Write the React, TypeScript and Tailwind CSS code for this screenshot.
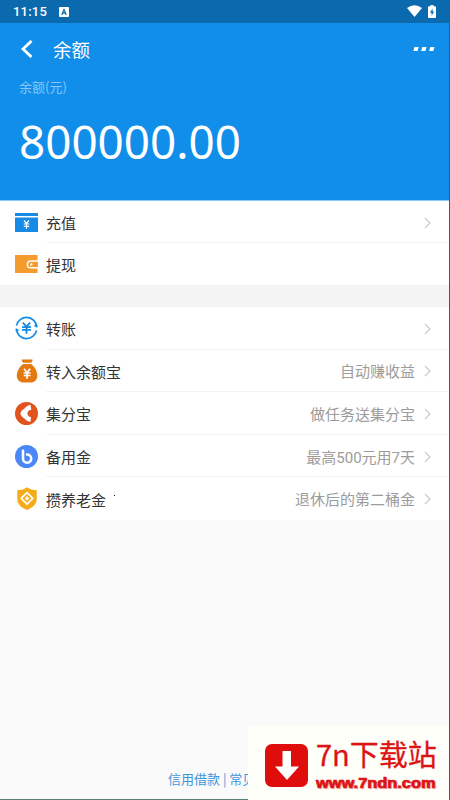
import React from 'react';

interface RowProps {
  icon: React.ReactNode;
  label: string;
  note?: string;
  arrow?: boolean;
  last?: boolean;
}

const Row: React.FC<RowProps> = ({ icon, label, note, arrow = true, last }) => (
  <div className="flex flex-1 items-center pl-[15px]">
    <div className="flex h-6 w-[23px] shrink-0 items-center justify-center">{icon}</div>
    <div
      className={`ml-2 flex h-full flex-1 items-center border-b pt-[2px] pr-[18px] ${last ? 'border-transparent' : 'border-[#f3f3f3]'}`}
    >
      <span className="text-[15px] leading-none text-[#333]">{label}</span>
      <span className="ml-auto pt-[3px] font-[Roboto,'Noto_Sans_CJK_SC',sans-serif] text-[15px] leading-none text-[#9c9c9c]">{note}</span>
      {arrow && (
        <svg className="ml-[9px]" width="7" height="12" viewBox="0 0 7 12" fill="none">
          <path d="M1 1l5 5-5 5" stroke="#c9c9c9" strokeWidth="1.2" />
        </svg>
      )}
    </div>
  </div>
);

const RechargeIcon = () => (
  <svg width="23" height="19" viewBox="0 0 23 19">
    <path d="M0 0h23v3H0zM0 4.5h23V19H0z" fill="#168be6" />
    <path d="M9 7.5l2.5 3 2.5-3M8.8 11h5.4M8.8 13.3h5.4M11.5 10.5v5.5" stroke="#fff" strokeWidth="1.2" fill="none" />
  </svg>
);

const WithdrawIcon = () => (
  <svg width="23" height="18" viewBox="0 0 23 18">
    <path d="M0 0h22.5v18H0z" fill="#f39b2d" />
    <path d="M23 6h-7.2a3.4 3.4 0 0 0 0 6.8H23" fill="#f39b2d" stroke="#fff" strokeWidth="1.4" />
    <circle cx="16.3" cy="9.4" r="1.2" fill="#fff" />
  </svg>
);

const TransferIcon = () => (
  <svg width="24" height="24" viewBox="0 0 24 24" fill="none" stroke="#168be6">
    <path d="M1.5 9.5A10.7 10.7 0 0 1 22.6 10.5M22.5 14.5A10.7 10.7 0 0 1 1.4 13.5" strokeWidth="1.8" />
    <path d="M19.4 9.4l3.8 2.6V8.5zM4.6 14.6L.8 12v3.5z" fill="#168be6" stroke="none" />
    <path d="M8.2 6.3l3.8 4.2 3.8-4.2M7.3 11h9.4M7.3 14h9.4M12 10.5v7.6" strokeWidth="1.9" />
  </svg>
);

const MoneyBagIcon = () => (
  <svg width="22" height="24" viewBox="0 0 22 24">
    <path d="M6.2.5h9.9q.7 0 .5.8-.4 1.7-1.7 2.5H7.4Q6.1 3 5.7 1.3 5.5.5 6.2.5z" fill="#e47911" />
    <path d="M7.3 4.9H15c3.5 2.3 6.3 7 6.3 11.6 0 4.8-2.9 7-6.8 7H7.7c-3.9 0-6.9-2.2-6.9-7C.8 11.9 3.7 7.2 7.3 4.9z" fill="#e47911" />
    <path d="M8 9.8l3.1 3.7 3.1-3.7M7.7 14h6.8M7.7 16.5h6.8M11.1 13.5v6.3" fill="none" stroke="#fff" strokeWidth="1.7" />
  </svg>
);

const PointsIcon = () => (
  <svg width="23" height="23" viewBox="0 0 23 23">
    <circle cx="11.5" cy="11.5" r="11.5" fill="#e2521d" />
    <path d="M15.5 2.8l.8 5.2-2 .3c-1.200.8-1.800 1.900-1.800 3.200s.6 2.400 1.800 3.200l1.700.4-.5 4.700c-2.500-.2-4.700-1.200-6-3.200-2-.9-3.500-2.700-4.200-5 .7-2.300 2.200-4.100 4.200-5.100 1.200-1.800 3.300-3.100 6-3.700z" fill="#fff" />
  </svg>
);

const ReserveIcon = () => (
  <svg width="23" height="23" viewBox="0 0 23 23">
    <circle cx="11.5" cy="11.5" r="11.5" fill="#4a87f7" />
    <path d="M8 5.8v8a4.1 4.1 0 1 0 4-4.3" fill="none" stroke="#fff" strokeWidth="2.6" strokeLinecap="round" />
  </svg>
);

const PensionIcon = () => (
  <svg width="20" height="23" viewBox="0 0 20 23">
    <path d="M10 .3c2.7 2 6 2.8 9.7 2.8v9c0 5.5-4.2 8.7-9.7 10.8C4.5 20.8.3 17.6.3 12.1v-9C4 3.1 7.3 2.3 10 .3z" fill="#f6ac19" />
    <path d="M10 5.6l5.8 5.8-5.8 5.8-5.8-5.8z" fill="none" stroke="#fff" strokeWidth="1.7" strokeLinejoin="round" />
    <path d="M10 9.5l1.9 1.9-1.9 1.9-1.900-1.900z" fill="#fff" stroke="#fff" strokeWidth="0.6" strokeLinejoin="round" />
  </svg>
);

const StatusBar = () => (
  <div className="flex h-[23px] items-center bg-[#0b69ad] px-[13px]">
    <span className="font-[Roboto] text-[13px] font-medium leading-none tracking-[0.2px] text-white">11:15</span>
    <svg className="ml-3" width="10" height="10" viewBox="0 0 10 10">
      <rect width="10" height="10" rx="1" fill="#fff" />
      <path d="M2.7 8L5 2.5 7.3 8M3.5 6.2h3" fill="none" stroke="#0b69ad" strokeWidth="1.2" />
    </svg>
    <svg className="mb-px ml-auto" width="15" height="12" viewBox="0 0 15 12">
      <path d="M0 3Q7.5-2.5 15 3L7.5 12z" fill="#fff" />
    </svg>
    <svg className="mb-px ml-[6px]" width="8" height="13" viewBox="0 0 8 13">
      <path d="M2.5 0h3v1.3H7q1 0 1 1V12q0 1-1 1H1q-1 0-1-1V2.3q0-1 1-1h1.5z" fill="#fff" />
      <path d="M4.6 3.5L2 7.7h1.6v3L6.1 6.5H4.6z" fill="#0b69ad" />
    </svg>
  </div>
);

const App: React.FC = () => {
  return (
    <div className="relative flex h-[800px] w-[450px] flex-col overflow-hidden border-r border-[#555] bg-[#fafafa] font-['Noto_Sans_CJK_SC',sans-serif]">
      <StatusBar />

      {/* Balance header */}
      <header className="h-[178px] shrink-0 border-b border-[#8cc8f5] bg-[#118eea] text-white">
        <div className="flex h-[52px] items-center pl-[21px] pr-[14px]">
          <svg width="12" height="18" viewBox="0 0 12 18" fill="none">
            <path d="M10.5 1L2 9l8.5 8" stroke="#fff" strokeWidth="2.9" />
          </svg>
          <h1 className="ml-5 text-[18.5px] leading-none">余额</h1>
          <svg className="ml-auto" width="22" height="4" viewBox="0 0 22 4" fill="#fff">
            <path d="M1.5 0h4.2L4.5 4H.3zM9.3 0h4.2l-1.2 4H8.1zM17.3 0h4.2l-1.2 4h-4.2z" />
          </svg>
        </div>
        <p className="mt-[5px] pl-[19px] text-[13px] leading-[14px] text-[#88c7f7]">余额(元)</p>
        <p className="mt-[22px] pl-[19px] font-['Noto_Sans'] text-[45.8px] leading-[50px]">800000.00</p>
      </header>

      <section className="flex h-[84px] shrink-0 flex-col bg-white">
        <Row icon={<RechargeIcon />} label="充值" />
        <Row icon={<WithdrawIcon />} label="提现" arrow={false} last />
      </section>

      <div className="h-[22px] shrink-0 bg-[#f4f4f4]" />

      <section className="flex h-[213px] shrink-0 flex-col bg-white">
        <Row icon={<TransferIcon />} label="转账" />
        <Row icon={<MoneyBagIcon />} label="转入余额宝" note="自动赚收益" />
        <Row icon={<PointsIcon />} label="集分宝" note="做任务送集分宝" />
        <Row icon={<ReserveIcon />} label="备用金" note="最高500元用7天" />
        <Row icon={<PensionIcon />} label="攒养老金" note="退休后的第二桶金" last />
      </section>
      <span className="absolute left-[114px] top-[495px] h-px w-px bg-black" />

      <footer className="mt-auto flex h-[28px] items-start border-b border-[#5c7d78] pl-[168px] text-[13px] leading-[14px] text-[#3d97dc]">
        <span className="whitespace-nowrap">信用借款 | 常见</span>
      </footer>

      {/* Download site badge over the bottom corner */}
      <div className="absolute -right-px bottom-0 flex h-[75px] w-[202px] items-start bg-[#fffffa] pl-[17px] pt-[18px]">
        <div className="mt-px flex h-[43px] w-[43px] shrink-0 items-center justify-center rounded-[7px] bg-[#df0d0c]">
          <svg width="26" height="29" viewBox="0 0 26 29">
            <path d="M8.5 0H17v15.5h8L13 29 1 15.5h7.5z" fill="#fff" />
          </svg>
        </div>
        <div className="ml-[8px] whitespace-nowrap text-[#dc1416]">
          <div className="-mt-[7px] text-[29px] leading-[34px] [-webkit-text-stroke:0.3px_#dc1416]">7n下载站</div>
          <div className="mt-[6px] origin-left scale-x-[1.17] font-['Liberation_Sans'] text-[14px] font-bold leading-[14px] [-webkit-text-stroke:0.7px_#dc1416] [text-shadow:1px_1px_1px_#e9a0a0]">
            www.7ndn.com
          </div>
        </div>
      </div>
    </div>
  );
};

export default App;
